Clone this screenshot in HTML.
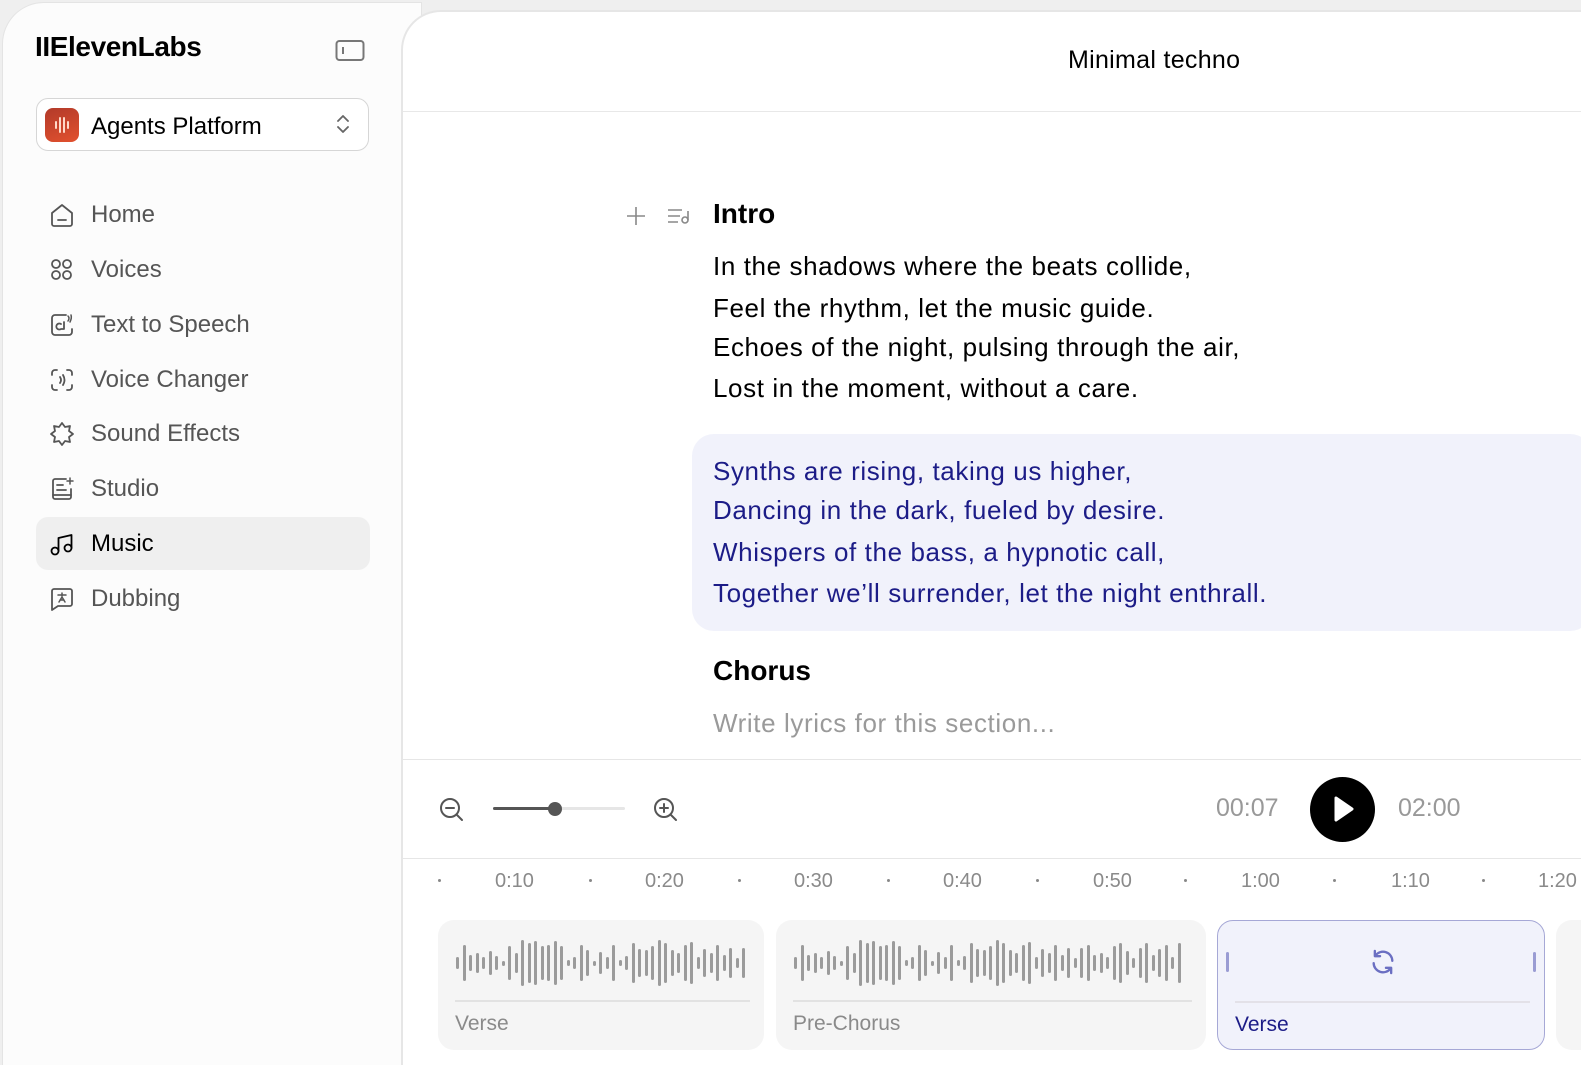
<!DOCTYPE html>
<html><head><meta charset="utf-8"><style>
*{margin:0;padding:0;box-sizing:border-box}
html,body{width:1581px;height:1065px;overflow:hidden}
body{background:#efefef;font-family:"Liberation Sans",sans-serif;position:relative;color:#000}
.side{position:absolute;left:2px;top:2px;width:420px;height:1063px;background:#fcfcfc;border:1px solid #e4e4e4;border-bottom:none;border-radius:42px 0 0 0}
.main{position:absolute;left:401px;top:10px;width:1180px;height:1055px;background:#fff;border:2px solid #e6e6e6;border-right:none;border-bottom:none;border-radius:40px 0 0 0}
.abs{position:absolute}
.nav{position:absolute;left:48px;font-size:24px;color:#555;display:flex;align-items:center}
.nav svg{width:28px;height:28px;margin-right:15px;fill:none;stroke:#555;stroke-width:1.8;stroke-linecap:round;stroke-linejoin:round}
.lyr{position:absolute;left:713px;font-size:26px;letter-spacing:0.6px}
.tl{position:absolute;top:870px;font-size:20px;color:#8a8a8a}
.dot{position:absolute;top:879px;width:3px;height:3px;border-radius:2px;background:#888}
.card{position:absolute;top:920px;height:130px;background:#f5f5f5;border-radius:16px}
.wave{position:absolute;left:18px;top:18px;height:50px;display:flex;align-items:center;gap:3.5px}
.wave i{display:block;width:3px;background:#9b9b9b;border-radius:2px}
.cl{position:absolute;left:17px;right:14px;top:80px;border-top:2px solid #e2e2e2}
.ct{position:absolute;left:17px;top:92px;font-size:21px;color:#8a8a8a}
</style></head><body>
<div class="side"></div>
<div class="abs" style="left:35px;top:31px;font-size:28px;font-weight:bold;letter-spacing:-0.4px">IIElevenLabs</div>
<svg class="abs" style="left:335px;top:39px" width="30" height="24" viewBox="0 0 30 24"><rect x="1.5" y="2" width="27" height="19" rx="3" fill="none" stroke="#777" stroke-width="2"/><line x1="8" y1="8" x2="8" y2="15" stroke="#777" stroke-width="2"/></svg>
<div class="abs" style="left:36px;top:98px;width:333px;height:53px;border:1px solid #d6d6d6;border-radius:12px;background:#fff"></div>
<div class="abs" style="left:45px;top:108px;width:34px;height:34px;border-radius:8px;background:linear-gradient(160deg,#b23a2a,#e2512e)"></div>
<svg class="abs" style="left:45px;top:108px" width="34" height="34"><g stroke="#ffd9c8" stroke-width="2" stroke-linecap="round"><line x1="11" y1="14" x2="11" y2="20"/><line x1="15" y1="10" x2="15" y2="24"/><line x1="19" y1="10" x2="19" y2="24"/><line x1="23" y1="14" x2="23" y2="20"/></g></svg>
<div class="abs" style="left:91px;top:113px;font-size:24px">Agents Platform</div>
<svg class="abs" style="left:333px;top:112px" width="20" height="24"><path d="M5 9l5-5 5 5M5 15l5 5 5-5" fill="none" stroke="#666" stroke-width="1.8" stroke-linecap="round" stroke-linejoin="round"/></svg>

<div class="nav" style="top:201px"><svg viewBox="0 0 28 28"><path d="M4 12L14 4l10 8v11a2 2 0 0 1-2 2H6a2 2 0 0 1-2-2z"/><line x1="10" y1="19" x2="18" y2="19"/></svg>Home</div>
<div class="nav" style="top:256px"><svg viewBox="0 0 28 28"><circle cx="8" cy="8" r="4"/><circle cx="19" cy="8" r="4"/><circle cx="8" cy="19" r="4"/><circle cx="19" cy="19" r="4"/></svg>Voices</div>
<div class="nav" style="top:311px"><svg viewBox="0 0 28 28"><path d="M18 4H7a3 3 0 0 0-3 3v14a3 3 0 0 0 3 3h14a3 3 0 0 0 3-3v-3"/><path d="M13 13a3 3 0 1 0 0 5h3v-7"/><path d="M20 5q2 2 0 5M23 4q1 3-1 7" stroke-width="1.5"/></svg>Text to Speech</div>
<div class="nav" style="top:366px"><svg viewBox="0 0 28 28"><path d="M4 9V7a3 3 0 0 1 3-3h2M19 4h2a3 3 0 0 1 3 3v2M24 19v2a3 3 0 0 1-3 3h-2M9 24H7a3 3 0 0 1-3-3v-2"/><path d="M12 11q2 3 0 6M15 9q3 5 0 10"/></svg>Voice Changer</div>
<div class="nav" style="top:420px"><svg viewBox="0 0 28 28"><path d="M14 3l3 4 5-1-1 5 4 3-4 3 1 5-5-1-3 4-3-4-5 1 1-5-4-3 4-3-1-5 5 1z"/></svg>Sound Effects</div>
<div class="nav" style="top:475px"><svg viewBox="0 0 28 28"><path d="M18 4H7a2 2 0 0 0-2 2v16a2 2 0 0 0 2 2h14a2 2 0 0 0 2-2v-8"/><line x1="9" y1="10" x2="15" y2="10"/><line x1="9" y1="15" x2="18" y2="15"/><line x1="5" y1="20" x2="23" y2="20"/><path d="M22 3v6M19 6h6" stroke-width="1.5"/></svg>Studio</div>
<div class="abs" style="left:36px;top:517px;width:334px;height:53px;background:#efefef;border-radius:12px"></div>
<div class="nav" style="top:530px;color:#000"><svg viewBox="0 0 28 28" style="stroke:#000"><circle cx="7" cy="21" r="3.5"/><circle cx="20" cy="18" r="3.5"/><path d="M10.5 21V8l13-3v13"/></svg>Music</div>
<div class="nav" style="top:585px"><svg viewBox="0 0 28 28"><path d="M4 6a2 2 0 0 1 2-2h16a2 2 0 0 1 2 2v13a2 2 0 0 1-2 2H10l-6 4z"/><path d="M10 10h8M14 8v3M11 17l3-5 3 5M12 15h4" stroke-width="1.5"/></svg>Dubbing</div>

<div class="main"></div>
<div class="abs" style="left:1068px;top:46px;font-size:25px;letter-spacing:0.3px">Minimal techno</div>
<div class="abs" style="left:403px;top:111px;width:1180px;border-top:1.5px solid #e8e8e8"></div>

<svg class="abs" style="left:624px;top:204px" width="24" height="24"><path d="M12 3v18M3 12h18" stroke="#888" stroke-width="1.6"/></svg>
<svg class="abs" style="left:666px;top:204px" width="26" height="24"><path d="M2 6h14M2 12h12M2 18h10" stroke="#888" stroke-width="1.6"/><circle cx="19" cy="16" r="3" fill="none" stroke="#888" stroke-width="1.6"/><path d="M22 16V7" stroke="#888" stroke-width="1.6"/></svg>
<div class="abs" style="left:713px;top:198px;font-size:28px;font-weight:bold">Intro</div>
<div class="lyr" style="top:251px">In the shadows where the beats collide,</div>
<div class="lyr" style="top:293px">Feel the rhythm, let the music guide.</div>
<div class="lyr" style="top:332px">Echoes of the night, pulsing through the air,</div>
<div class="lyr" style="top:373px">Lost in the moment, without a care.</div>
<div class="abs" style="left:692px;top:434px;width:900px;height:197px;background:#f1f2fb;border-radius:22px"></div>
<div class="lyr" style="top:456px;color:#1c1c87">Synths are rising, taking us higher,</div>
<div class="lyr" style="top:495px;color:#1c1c87">Dancing in the dark, fueled by desire.</div>
<div class="lyr" style="top:537px;color:#1c1c87">Whispers of the bass, a hypnotic call,</div>
<div class="lyr" style="top:578px;color:#1c1c87">Together we’ll surrender, let the night enthrall.</div>
<div class="abs" style="left:713px;top:655px;font-size:28px;font-weight:bold">Chorus</div>
<div class="lyr" style="top:708px;color:#9a9a9a">Write lyrics for this section...</div>

<div class="abs" style="left:403px;top:759px;width:1180px;border-top:1.5px solid #e6e6e6"></div>
<svg class="abs" style="left:438px;top:796px" width="28" height="28"><circle cx="12" cy="12" r="9" fill="none" stroke="#555" stroke-width="2"/><path d="M8 12h8M19 19l5 5" stroke="#555" stroke-width="2" stroke-linecap="round"/></svg>
<div class="abs" style="left:493px;top:807px;width:132px;height:3px;background:#e6e6e6;border-radius:2px"></div>
<div class="abs" style="left:493px;top:807px;width:62px;height:3px;background:#555;border-radius:2px"></div>
<div class="abs" style="left:548px;top:802px;width:14px;height:14px;background:#555;border-radius:7px"></div>
<svg class="abs" style="left:652px;top:796px" width="28" height="28"><circle cx="12" cy="12" r="9" fill="none" stroke="#555" stroke-width="2"/><path d="M8 12h8M12 8v8M19 19l5 5" stroke="#555" stroke-width="2" stroke-linecap="round"/></svg>
<div class="abs" style="left:1216px;top:794px;font-size:25px;color:#999">00:07</div>
<div class="abs" style="left:1310px;top:777px;width:65px;height:65px;background:#000;border-radius:50%"></div>
<svg class="abs" style="left:1310px;top:777px" width="65" height="65"><path d="M26 21l16 11-16 11z" fill="#fff" stroke="#fff" stroke-width="3" stroke-linejoin="round"/></svg>
<div class="abs" style="left:1398px;top:794px;font-size:25px;color:#999">02:00</div>
<div class="abs" style="left:403px;top:858px;width:1180px;border-top:1.5px solid #e6e6e6"></div>

<div class="dot" style="left:438px"></div><div class="tl" style="left:495px">0:10</div>
<div class="dot" style="left:589px"></div><div class="tl" style="left:645px">0:20</div>
<div class="dot" style="left:738px"></div><div class="tl" style="left:794px">0:30</div>
<div class="dot" style="left:887px"></div><div class="tl" style="left:943px">0:40</div>
<div class="dot" style="left:1036px"></div><div class="tl" style="left:1093px">0:50</div>
<div class="dot" style="left:1184px"></div><div class="tl" style="left:1241px">1:00</div>
<div class="dot" style="left:1333px"></div><div class="tl" style="left:1391px">1:10</div>
<div class="dot" style="left:1482px"></div><div class="tl" style="left:1538px">1:20</div>

<div class="card" style="left:438px;width:326px">
<div class="wave"><i style="height:12px"></i><i style="height:36px"></i><i style="height:16px"></i><i style="height:20px"></i><i style="height:12px"></i><i style="height:24px"></i><i style="height:14px"></i><i style="height:5px"></i><i style="height:34px"></i><i style="height:20px"></i><i style="height:46px"></i><i style="height:40px"></i><i style="height:44px"></i><i style="height:34px"></i><i style="height:36px"></i><i style="height:44px"></i><i style="height:34px"></i><i style="height:6px"></i><i style="height:12px"></i><i style="height:36px"></i><i style="height:26px"></i><i style="height:5px"></i><i style="height:22px"></i><i style="height:12px"></i><i style="height:36px"></i><i style="height:6px"></i><i style="height:14px"></i><i style="height:40px"></i><i style="height:28px"></i><i style="height:26px"></i><i style="height:34px"></i><i style="height:46px"></i><i style="height:40px"></i><i style="height:26px"></i><i style="height:20px"></i><i style="height:36px"></i><i style="height:42px"></i><i style="height:12px"></i><i style="height:28px"></i><i style="height:20px"></i><i style="height:36px"></i><i style="height:16px"></i><i style="height:30px"></i><i style="height:10px"></i><i style="height:30px"></i></div>
<div class="cl"></div><div class="ct">Verse</div></div>
<div class="card" style="left:776px;width:430px">
<div class="wave"><i style="height:12px"></i><i style="height:36px"></i><i style="height:16px"></i><i style="height:20px"></i><i style="height:12px"></i><i style="height:24px"></i><i style="height:14px"></i><i style="height:5px"></i><i style="height:34px"></i><i style="height:20px"></i><i style="height:46px"></i><i style="height:40px"></i><i style="height:44px"></i><i style="height:34px"></i><i style="height:36px"></i><i style="height:44px"></i><i style="height:34px"></i><i style="height:6px"></i><i style="height:12px"></i><i style="height:36px"></i><i style="height:26px"></i><i style="height:5px"></i><i style="height:22px"></i><i style="height:12px"></i><i style="height:36px"></i><i style="height:6px"></i><i style="height:14px"></i><i style="height:40px"></i><i style="height:28px"></i><i style="height:26px"></i><i style="height:34px"></i><i style="height:46px"></i><i style="height:40px"></i><i style="height:26px"></i><i style="height:20px"></i><i style="height:36px"></i><i style="height:42px"></i><i style="height:12px"></i><i style="height:28px"></i><i style="height:20px"></i><i style="height:36px"></i><i style="height:16px"></i><i style="height:30px"></i><i style="height:10px"></i><i style="height:30px"></i><i style="height:36px"></i><i style="height:16px"></i><i style="height:20px"></i><i style="height:12px"></i><i style="height:34px"></i><i style="height:40px"></i><i style="height:24px"></i><i style="height:10px"></i><i style="height:30px"></i><i style="height:40px"></i><i style="height:16px"></i><i style="height:28px"></i><i style="height:36px"></i><i style="height:12px"></i><i style="height:40px"></i></div>
<div class="cl"></div><div class="ct">Pre-Chorus</div></div>
<div class="card" style="left:1217px;width:328px;background:#f1f2fb;border:1.5px solid #a6a8d6">
<div class="abs" style="left:8px;top:31px;width:3px;height:20px;background:#9a9cd3;border-radius:2px"></div>
<div class="abs" style="right:8px;top:31px;width:3px;height:20px;background:#9a9cd3;border-radius:2px"></div>
<svg class="abs" style="left:151px;top:27px" width="28" height="28" viewBox="0 0 24 24"><path d="M20 11a8 8 0 0 0-14.5-4.5M4 13a8 8 0 0 0 14.5 4.5" fill="none" stroke="#6b6fc2" stroke-width="2" stroke-linecap="round"/><path d="M5 2.5v4.5h4.5M19 21.5V17h-4.5" fill="none" stroke="#6b6fc2" stroke-width="2" stroke-linecap="round" stroke-linejoin="round"/></svg>
<div class="cl" style="border-color:#e3e1e8"></div><div class="ct" style="color:#1c1c87">Verse</div></div>
<div class="card" style="left:1556px;width:25px;border-radius:16px 0 0 16px"></div>
</body></html>
